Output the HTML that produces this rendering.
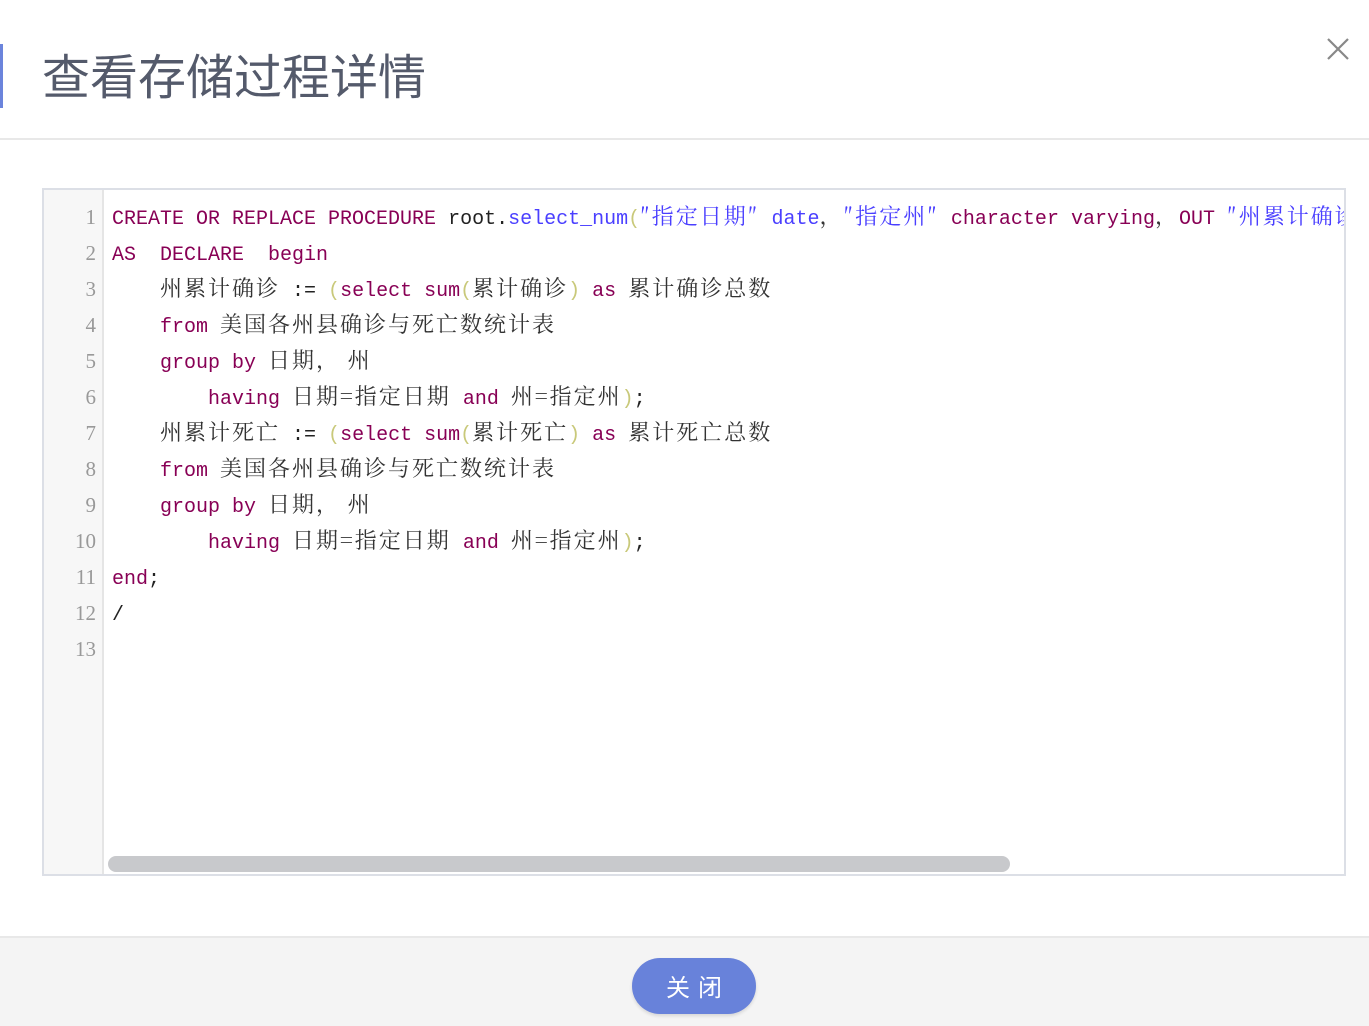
<!DOCTYPE html>
<html><head><meta charset="utf-8"><style>
*{margin:0;padding:0;box-sizing:border-box}
body{width:1369px;height:1026px;background:#fff;position:relative;overflow:hidden;font-family:"Liberation Sans","Noto Sans CJK SC",sans-serif}
.bar{position:absolute;left:0;top:44px;width:3px;height:64px;background:#6b84dc}
.title{position:absolute;left:42px;top:41px;font-size:48px;line-height:64px;color:#545a6b;font-family:"Noto Sans CJK SC",sans-serif;letter-spacing:0}
.close{position:absolute;left:1326px;top:37px}
.hr{position:absolute;left:0;top:138px;width:1369px;height:2px;background:#e8e8e8}
.ed{position:absolute;left:42px;top:188px;width:1304px;height:688px;border:2px solid #dcdfe6;overflow:hidden}
.gut{position:absolute;left:0;top:0;width:60px;height:100%;background:#f7f7f7;border-right:2px solid #e5e5e5;padding-top:9px}
.gut div{height:36px;line-height:36px;text-align:right;padding-right:6px;font-family:"Liberation Serif","Noto Serif CJK SC",serif;font-size:21px;color:#999}
.code{position:absolute;left:68px;top:12px;font-family:"Liberation Mono","Noto Serif CJK SC",monospace;font-size:20px;color:#222}
.code div{height:36px;line-height:36px;white-space:pre;overflow:hidden}
.c,.sc{line-height:0}
.c{font-family:"Noto Serif CJK SC",serif;font-size:22px;letter-spacing:2px;color:#333}
.k{color:#880055}
.s{color:#4a3fff}
.sc{color:#4a3fff;font-family:"Noto Serif CJK SC",serif;font-size:22px;letter-spacing:2px}
.p{color:#c9c97a}
.sb{position:absolute;left:64px;top:666px;width:902px;height:16px;border-radius:8px;background:#c8c9cc}
.foot{position:absolute;left:0;top:936px;width:1369px;height:90px;background:#f4f4f4;border-top:2px solid #e8e8e8}
.btn{position:absolute;left:632px;top:958px;width:124px;height:56px;border-radius:28px;background:#6882da;color:#fff;font-size:24px;line-height:56px;text-align:center;padding-left:8px;font-family:"Noto Sans CJK SC",sans-serif;letter-spacing:8px;box-shadow:0 2px 3px rgba(0,0,0,.12)}
</style></head><body>
<div class="bar"></div>
<div class="title">查看存储过程详情</div>
<svg class="close" width="24" height="24" viewBox="0 0 24 24"><path d="M2 2L22 22M22 2L2 22" stroke="#888" stroke-width="2.2" fill="none"/></svg>
<div class="hr"></div>
<div class="ed">
<div class="gut"><div>1</div><div>2</div><div>3</div><div>4</div><div>5</div><div>6</div><div>7</div><div>8</div><div>9</div><div>10</div><div>11</div><div>12</div><div>13</div></div>
<div class="code"><div><span class="k">CREATE OR REPLACE PROCEDURE</span> root.<span class="s">select_num</span><span class="p">(</span><span class="sc">″指定日期″</span><span class="s"> date</span><span class="c">，</span><span class="sc">″指定州″</span> <span class="k">character varying</span><span class="c">，</span><span class="k">OUT</span> <span class="sc">″州累计确诊总数″</span></div><div><span class="k">AS  DECLARE  begin</span></div><div>    <span class="c">州累计确诊</span> := <span class="p">(</span><span class="k">select sum</span><span class="p">(</span><span class="c">累计确诊</span><span class="p">)</span> <span class="k">as</span> <span class="c">累计确诊总数</span></div><div>    <span class="k">from</span> <span class="c">美国各州县确诊与死亡数统计表</span></div><div>    <span class="k">group by</span> <span class="c">日期， 州</span></div><div>        <span class="k">having</span> <span class="c">日期=指定日期</span> <span class="k">and</span> <span class="c">州=指定州</span><span class="p">)</span>;</div><div>    <span class="c">州累计死亡</span> := <span class="p">(</span><span class="k">select sum</span><span class="p">(</span><span class="c">累计死亡</span><span class="p">)</span> <span class="k">as</span> <span class="c">累计死亡总数</span></div><div>    <span class="k">from</span> <span class="c">美国各州县确诊与死亡数统计表</span></div><div>    <span class="k">group by</span> <span class="c">日期， 州</span></div><div>        <span class="k">having</span> <span class="c">日期=指定日期</span> <span class="k">and</span> <span class="c">州=指定州</span><span class="p">)</span>;</div><div><span class="k">end</span>;</div><div>/</div><div> </div></div>
<div class="sb"></div>
</div>
<div class="foot"></div>
<div class="btn">关闭</div>
</body></html>
